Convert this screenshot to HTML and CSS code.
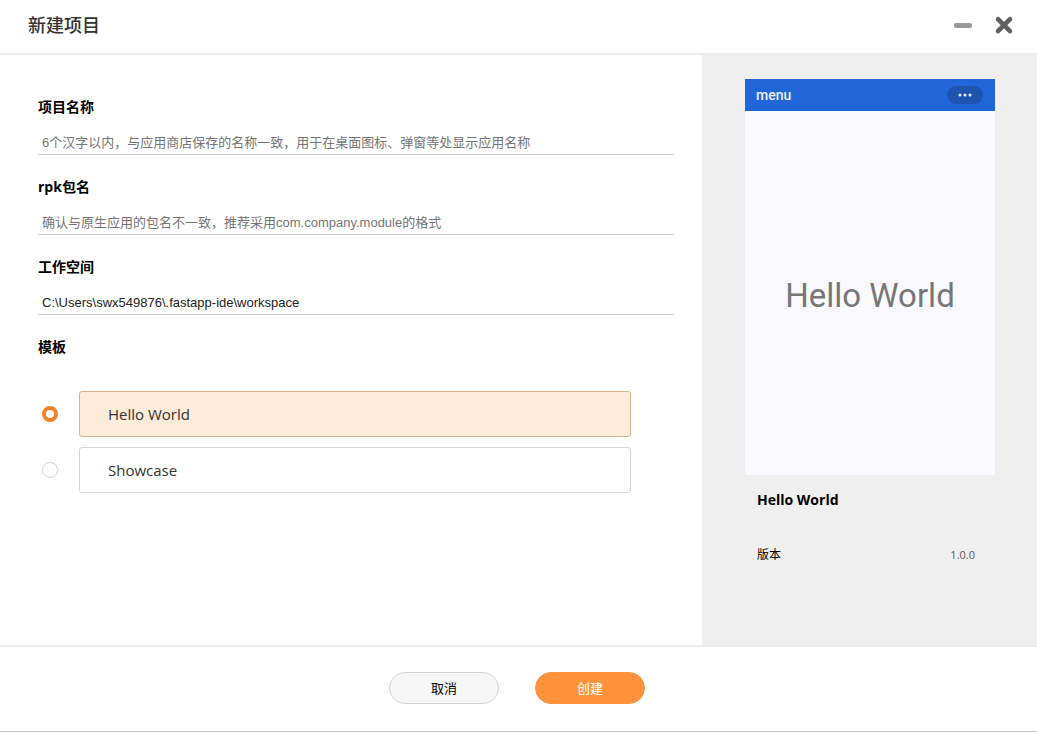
FILE: index.html
```html
<!DOCTYPE html>
<html lang="zh-CN">
<head>
<meta charset="utf-8">
<meta name="viewport" content="width=device-width, initial-scale=1">
<title>新建项目</title>
<link rel="stylesheet" href="styles.css">
</head>
<body>
<form class="dialog">
  <header class="titlebar">
    <h1 class="title">新建项目</h1>
    <div class="window-controls">
      <button class="window-button" type="button" aria-label="最小化">
        <svg width="20" height="20" viewBox="0 0 20 20"><rect x="0" y="8" width="18" height="5" rx="2" fill="#999"/></svg>
      </button>
      <button class="window-button" type="button" aria-label="关闭">
        <svg width="20" height="20" viewBox="0 0 20 20"><path d="M4 4.200L16 16.200M16 4.200L4 16.200" fill="none" stroke="#606060" stroke-width="4.600" stroke-linecap="round"/></svg>
      </button>
    </div>
  </header>

  <div class="content">
    <main class="settings">
      <div class="field">
        <label class="field-label" for="name">项目名称</label>
        <input class="field-input" id="name" type="text" placeholder="6个汉字以内，与应用商店保存的名称一致，用于在桌面图标、弹窗等处显示应用名称">
      </div>
      <div class="field">
        <label class="field-label" for="package">rpk包名</label>
        <input class="field-input" id="package" type="text" placeholder="确认与原生应用的包名不一致，推荐采用com.company.module的格式">
      </div>
      <div class="field">
        <label class="field-label" for="workspace">工作空间</label>
        <input class="field-input" id="workspace" type="text" value="C:\Users\swx549876\.fastapp-ide\workspace">
      </div>
      <fieldset class="templates">
        <legend class="field-label">模板</legend>
        <div class="template-list">
          <div class="template">
            <input class="template-radio" id="hello" type="radio" name="template" checked>
            <label class="template-name" for="hello">Hello World</label>
          </div>
          <div class="template">
            <input class="template-radio" id="showcase" type="radio" name="template">
            <label class="template-name" for="showcase">Showcase</label>
          </div>
        </div>
      </fieldset>
    </main>

    <aside class="preview">
      <div class="phone">
        <div class="phone-bar">
          <span>menu</span>
          <svg width="36" height="18" viewBox="0 0 36 18"><rect width="36" height="18" rx="9" fill="#1d54ae"/><g fill="#e8f0ff"><circle cx="13" cy="9" r="1.500"/><circle cx="18" cy="9" r="1.500"/><circle cx="23" cy="9" r="1.500"/></g></svg>
        </div>
        <div class="phone-screen">Hello World</div>
      </div>
      <div class="details">
        <h2 class="details-title">Hello World</h2>
        <div class="details-row"><span>版本</span><span class="version">1.0.0</span></div>
      </div>
    </aside>
  </div>

  <footer class="actions">
    <button class="button" type="button">取消</button>
    <button class="button button-primary" type="submit">创建</button>
  </footer>
</form>
</body>
</html>
```

FILE: styles.css
```css
* {
  box-sizing: border-box;
}

body {
  margin: 0;
  padding-bottom: 1px;
  background: #fff;
  color: #000;
  font-family: "Open Sans", "Noto Sans CJK SC", sans-serif;
}

.dialog {
  display: flex;
  flex-direction: column;
  min-height: calc(100vh - 1px);
  border-bottom: 1px solid #c3c3c3;
}

.titlebar {
  display: flex;
  align-items: center;
  justify-content: space-between;
  height: 55px;
  padding: 0 23px 4px 28px;
  border-bottom: 2px solid #ececec;
}

.title {
  margin: 0;
  color: #333;
  font-size: 18px;
  font-weight: 500;
  line-height: 24px;
}

.window-controls {
  display: flex;
  gap: 20px;
}

.window-button {
  display: flex;
  padding: 0;
  border: 0;
  background: none;
}

.content {
  display: flex;
  flex: 1;
}

.settings {
  flex: 1;
  padding: 42px 28px 42px 38px;
}

.field {
  display: flex;
  flex-direction: column;
  gap: 13px;
  margin-bottom: 22px;
}

.field-label {
  padding: 0;
  font-size: 14px;
  font-weight: 700;
  line-height: 20px;
}

.field-input {
  height: 25px;
  padding: 0 4px;
  border: 0;
  border-bottom: 1px solid #ccc;
  outline: 0;
  background: none;
  color: #222;
  font-family: "Liberation Sans", "Noto Sans CJK SC", sans-serif;
  font-size: 13px;
}

.field-input::placeholder {
  color: #757575;
}

.templates {
  margin: 0;
  padding: 0;
  border: 0;
}

.template-list {
  display: grid;
  gap: 10px;
  padding: 34px 43px 0 4px;
}

.template {
  display: flex;
  align-items: center;
  gap: 21px;
}

.template-radio {
  width: 16px;
  height: 16px;
  margin: 0;
  appearance: none;
  border: 1px solid #d4d4d4;
  border-radius: 50%;
  background: #fff;
}

.template-radio:checked {
  border: 4px solid #f08228;
}

.template-name {
  flex: 1;
  padding: 10px 28px;
  border: 1px solid #d3d6dc;
  border-radius: 3px;
  color: #333;
  font-size: 15px;
  line-height: 24px;
}

.template-radio:checked + .template-name {
  border-color: #e0b08c;
  background: #ffebda;
}

.preview {
  width: 335px;
  padding: 24px 42px 24px 43px;
  background: #efefef;
}

.phone {
  background: #faf9ff;
}

.phone-bar {
  display: flex;
  align-items: center;
  justify-content: space-between;
  height: 32px;
  padding: 0 12px 0 11px;
  background: #2066d8;
  color: #e8f0ff;
  font-family: Roboto, sans-serif;
  font-size: 14px;
  font-weight: 500;
}

.phone-screen {
  display: grid;
  place-items: center;
  height: 364px;
  padding-top: 4px;
  color: #777;
  font-family: Roboto, sans-serif;
  font-size: 33px;
}

.details {
  padding: 15px 20px 0 12px;
}

.details-title {
  margin: 0 0 35px;
  font-size: 14px;
  font-weight: 700;
  line-height: 20px;
}

.details-row {
  display: flex;
  align-items: center;
  justify-content: space-between;
  font-size: 12px;
  line-height: 20px;
}

.version {
  color: #555;
  font-size: 11px;
}

.actions {
  display: flex;
  justify-content: center;
  gap: 36px;
  padding: 25px 3px 27px 0;
  border-top: 2px solid #ececec;
}

.button {
  width: 110px;
  height: 32px;
  padding: 0 0 2px;
  border: 1px solid #d2d2d2;
  border-radius: 16px;
  background: #f6f6f6;
  color: #000;
  font-family: "Liberation Sans", "Noto Sans CJK SC", sans-serif;
  font-size: 13px;
}

.button-primary {
  border-color: #ff933c;
  background: #ff933c;
  color: #fff;
}
```
